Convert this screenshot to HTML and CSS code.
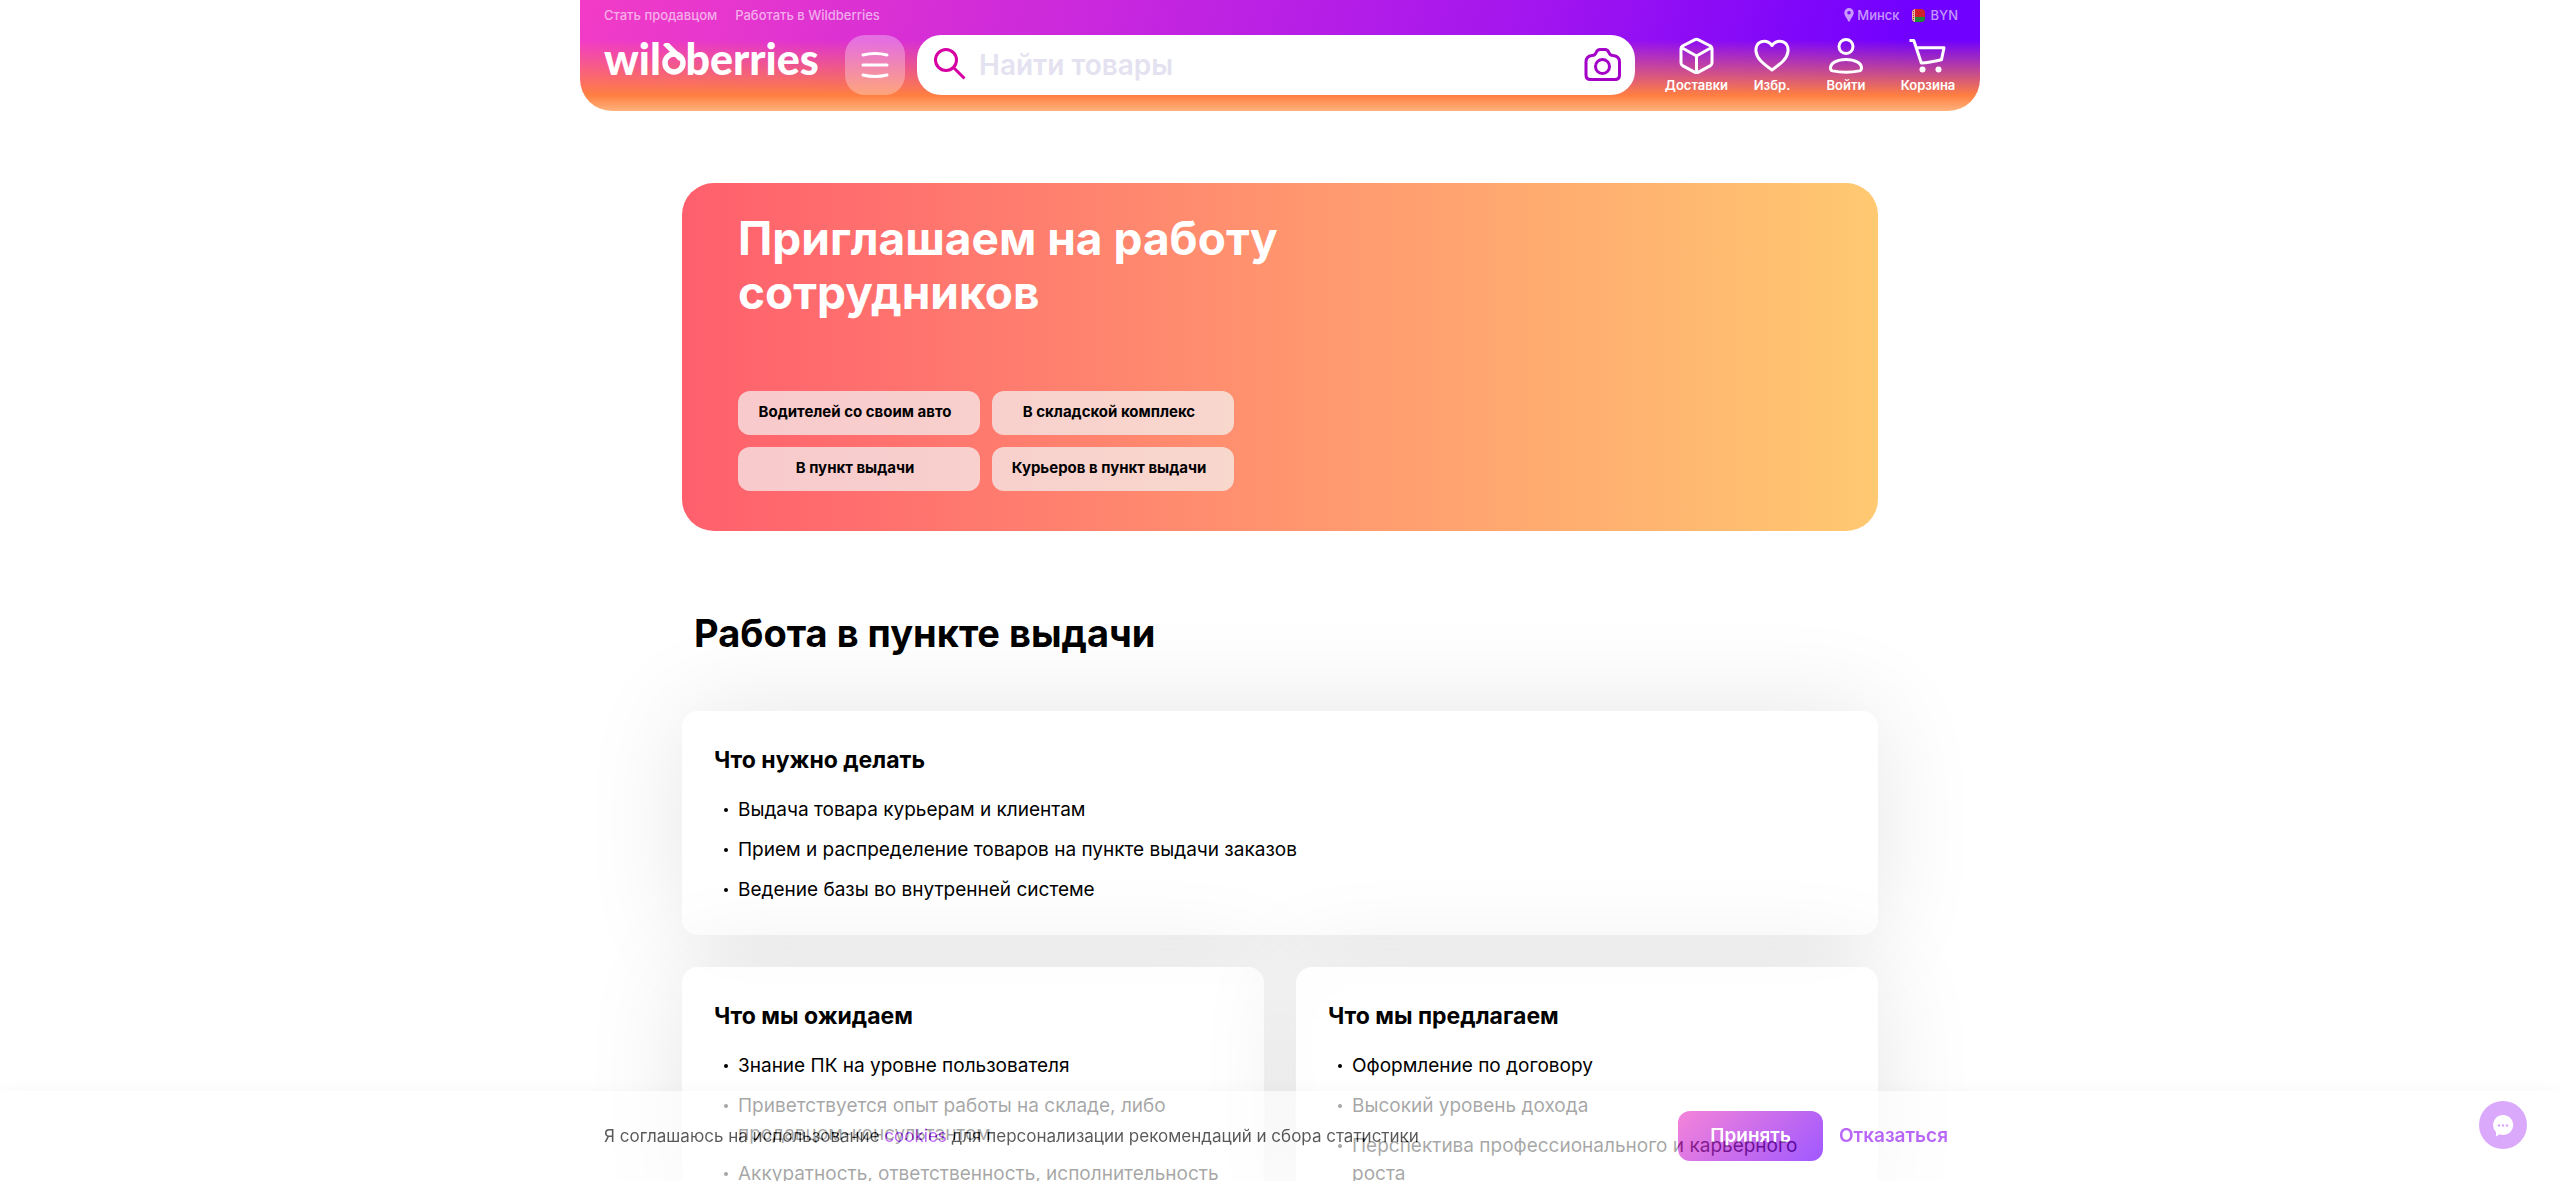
FILE: index.html
```html
<!DOCTYPE html>
<html lang="ru">
<head>
<meta charset="utf-8">
<meta name="viewport" content="width=device-width, initial-scale=1">
<title>Работа в Wildberries</title>
<link rel="stylesheet" href="styles.css">
</head>
<body>
<header class="header">
  <div class="topbar">
    <nav class="topbar-links">
      <a href="#">Стать продавцом</a>
      <a href="#">Работать в Wildberries</a>
    </nav>
    <div class="topbar-region">
      <a class="region-link" href="#">
        <svg width="10" height="14" viewBox="0 0 10 14" aria-hidden="true"><path fill="currentColor" fill-rule="evenodd" d="M5 0a4.700 4.700 0 0 0-4.700 4.700C.3 8 3.500 10.500 4.300 13.500h1.400C6.500 10.500 9.700 8 9.700 4.700A4.700 4.700 0 0 0 5 0Zm0 3a1.800 1.800 0 1 1 0 3.600A1.800 1.800 0 0 1 5 3Z"/></svg>
        Минск
      </a>
      <button class="currency" type="button">
        <svg width="13" height="13" viewBox="0 0 13 13" aria-hidden="true">
          <clipPath id="flag"><rect width="13" height="13" rx="4"/></clipPath>
          <g clip-path="url(#flag)"><rect width="13" height="13" fill="#d0202a"/><rect y="8" width="13" height="5" fill="#1c8a3c"/><rect width="3" height="13" fill="#e9b9a8"/><path stroke="#c8202a" stroke-dasharray="1 1" d="M1.500 0v13"/></g>
        </svg>
        BYN
      </button>
    </div>
  </div>
  <div class="header-main">
    <a class="logo" href="#" aria-label="wildberries">wil<span class="logo-d">d<svg width="26" height="32" viewBox="0 0 26 32" fill="none" stroke="#fff" stroke-width="5.500" aria-hidden="true"><circle cx="13" cy="20" r="9"/><path d="M4 0l16 16"/></svg></span>berries</a>
    <div class="search-row">
      <button class="menu-button" type="button" aria-label="Каталог">
        <svg width="30" height="30" viewBox="0 0 30 30" fill="none" stroke="#fff" stroke-width="3" stroke-linecap="round" aria-hidden="true"><path d="M3 5q12-3 24 0M3 15h24M3 25q12 3 24 0"/></svg>
      </button>
      <form class="search">
        <svg width="40" height="40" viewBox="0 0 40 40" fill="none" stroke="#d600a2" stroke-width="3" aria-hidden="true"><circle cx="16" cy="15" r="10.500"/><path d="M23.500 22.500 34.500 33.500"/></svg>
        <input class="search-input" type="search" placeholder="Найти товары" aria-label="Найти товары">
        <button class="camera" type="button" aria-label="Поиск по фото">
          <svg width="40" height="40" viewBox="0 0 40 40" fill="none" stroke="#a400c8" stroke-width="3" stroke-linejoin="round" aria-hidden="true"><path d="M9 10.500c2.500 0 3.500-1 4.300-3.200C14.200 5 15 4.500 17 4.500h5c2 0 2.800.5 3.700 2.800.8 2.200 1.800 3.200 4.300 3.200 4.500.5 6.500 3 6.500 6.500v13c0 3-1.500 4.500-4.500 4.500H7.500c-3 0-4.500-1.500-4.500-4.500V17c0-3.500 1.500-6 6-6.500Z"/><circle cx="19.500" cy="21.500" r="7"/></svg>
        </button>
      </form>
    </div>
    <nav class="actions">
      <a class="action" href="#">
        <svg width="40" height="40" viewBox="0 0 40 40" aria-hidden="true"><path d="M18.500 4.800q2-1 4 0l12 6.200q1.500 1 1.500 2.800v14q0 1.800-1.500 2.800l-12 6.500q-2 1-4 0l-12-6.500Q5 29.600 5 27.800v-14Q5 12 6.500 11ZM5.500 12.500l15 8.500 15-8.500M20.500 21v16.500"/></svg>
        Доставки
      </a>
      <a class="action" href="#">
        <svg width="40" height="40" viewBox="0 0 40 40" aria-hidden="true"><path d="M20 10.500C17 6.500 13.500 6 10.500 6.500 5.500 7.300 3.500 11.500 4 16.500 4.700 23.500 11 28.500 20 35c9-6.500 15.300-11.500 16-18.500.5-5-1.500-9.200-6.500-10C26.500 6 23 6.500 20 10.500Z"/></svg>
        Избр.
      </a>
      <a class="action" href="#">
        <svg width="40" height="40" viewBox="0 0 40 40" aria-hidden="true"><circle cx="20" cy="11.500" r="7"/><path d="M20 24.500c-9 0-15.500 3.500-15.500 8.500 0 1.800.6 2.500 2 2.900 8 1.700 19 1.700 27 0 1.400-.4 2-1.100 2-2.900 0-5-6.500-8.500-15.500-8.500Z"/></svg>
        Войти
      </a>
      <a class="action action-cart" href="#">
        <svg width="40" height="40" viewBox="0 0 40 40" aria-hidden="true"><path d="M1.500 5.500h4.300l7.500 22.500q8-.3 20.200-3.300l2.500-12H8.500"/><g class="cart-wheels"><circle cx="14.500" cy="34.500" r="3"/><circle cx="30.500" cy="34.500" r="3"/></g></svg>
        Корзина
      </a>
    </nav>
  </div>
</header>

<main class="content">
  <section class="hero">
    <h1 class="hero-title">Приглашаем на работу сотрудников</h1>
    <div class="hero-links">
      <a href="#">Водителей со своим авто</a>
      <a href="#">В складской комплекс</a>
      <a href="#">В пункт выдачи</a>
      <a href="#">Курьеров в пункт выдачи</a>
    </div>
  </section>

  <h2 class="section-title">Работа в пункте выдачи</h2>
  <div class="cards">
    <section class="card card-wide">
      <h3>Что нужно делать</h3>
      <ul>
        <li>Выдача товара курьерам и клиентам</li>
        <li>Прием и распределение товаров на пункте выдачи заказов</li>
        <li>Ведение базы во внутренней системе</li>
      </ul>
    </section>
    <section class="card">
      <h3>Что мы ожидаем</h3>
      <ul>
        <li>Знание ПК на уровне пользователя</li>
        <li>Приветствуется опыт работы на складе, либо продавцом-консультантом</li>
        <li>Аккуратность, ответственность, исполнительность</li>
      </ul>
    </section>
    <section class="card">
      <h3>Что мы предлагаем</h3>
      <ul>
        <li>Оформление по договору</li>
        <li>Высокий уровень дохода</li>
        <li>Перспектива профессионального и карьерного роста</li>
      </ul>
    </section>
  </div>
</main>

<aside class="cookies">
  <div class="cookies-inner">
    <p>Я соглашаюсь на использование <a href="#">cookies</a> для персонализации рекомендаций и сбора статистики</p>
    <div class="cookies-actions">
      <button class="accept" type="button">Принять</button>
      <button class="decline" type="button">Отказаться</button>
    </div>
  </div>
</aside>

<button class="chat" type="button" aria-label="Чат">
  <svg width="24" height="24" viewBox="0 0 24 24" aria-hidden="true"><path fill="#fff" d="M12 2a10 10 0 1 1-3.500 19.300L5 23.500V19A10 10 0 0 1 12 2Z"/><g fill="#dba9fb"><circle cx="8" cy="12.500" r="1.300"/><circle cx="12" cy="12.500" r="1.300"/><circle cx="16" cy="12.500" r="1.300"/></g></svg>
</button>
</body>
</html>
```

FILE: styles.css
```css
*, *::before, *::after { box-sizing: border-box; }

body {
  margin: 0;
  background: #fff;
  color: #000;
  font-family: Inter, "Liberation Sans", sans-serif;
  font-size: 19px;
  line-height: 28px;
}

h1, h2, h3, p, ul { margin: 0; padding: 0; }
a { color: inherit; text-decoration: none; }
button, input { font: inherit; border: 0; padding: 0; background: none; color: inherit; }
button { cursor: pointer; }
svg { display: block; flex: none; }

/* Header */
.header {
  max-width: 1400px;
  margin: 0 auto;
  padding: 5px 22px 16px 24px;
  border-radius: 0 0 32px 32px;
  background:
    linear-gradient(180deg, rgba(255, 127, 65, 0) 36%, #ff7f41 86%, #ffb27d 100%),
    linear-gradient(105deg, #f23cc7 0%, #c727de 38%, #a416ee 66%, #7000ff 94%);
}
.topbar {
  display: flex;
  justify-content: space-between;
  margin-bottom: 10px;
  font-size: 13px;
  font-weight: 500;
  line-height: 20px;
  color: rgba(255, 255, 255, .6);
}
.topbar-links { display: flex; gap: 18px; }
.topbar-region { display: flex; gap: 12px; }
.region-link, .currency { display: flex; align-items: center; gap: 3px; }
.currency { gap: 6px; }

.header-main { display: flex; }
.logo {
  width: 241px;
  font-family: Lato, sans-serif;
  font-size: 43px;
  font-weight: 900;
  line-height: 48px;
  color: #fff;
}
.logo-d { position: relative; color: transparent; }
.logo-d svg { position: absolute; left: 0; bottom: 9px; }

.search-row { display: flex; flex: 1; gap: 12px; }
.menu-button {
  display: flex;
  align-items: center;
  justify-content: center;
  width: 60px;
  height: 60px;
  border-radius: 20px;
  background: rgba(255, 255, 255, .3);
}
.search {
  display: flex;
  flex: 1;
  align-items: center;
  gap: 9px;
  height: 60px;
  padding: 0 12px 0 13px;
  border-radius: 24px;
  background: #fff;
}
.search-input {
  flex: 1;
  min-width: 0;
  height: 60px;
  font-size: 28px;
  font-weight: 600;
  outline: none;
}
.search-input::placeholder { color: #e4e2f0; opacity: 1; }

.actions { display: flex; gap: 14px; margin-left: 30px; }
.action {
  display: flex;
  flex-direction: column;
  align-items: center;
  min-width: 60px;
  font-size: 13px;
  font-weight: 600;
  line-height: 20px;
  color: #fff;
}
.action-cart { margin-left: 8px; }
.action svg {
  fill: none;
  stroke: #fff;
  stroke-width: 3px;
  stroke-linejoin: round;
}
.action .cart-wheels { fill: #fff; stroke: none; }

/* Page content */
.content {
  max-width: 1196px;
  margin: 72px auto 0;
}
.hero {
  padding: 28px 56px 40px;
  border-radius: 32px;
  background: linear-gradient(90deg, #ff5f6d, #ffc971);
}
.hero-title {
  max-width: 560px;
  margin-bottom: 72px;
  font-size: 46px;
  font-weight: 700;
  line-height: 54px;
  color: #fff;
}
.hero-links {
  display: grid;
  grid-template-columns: repeat(2, 242px);
  gap: 12px;
}
.hero-links a {
  padding: 5px 8px 7px 0;
  border-radius: 12px;
  background: rgba(245, 245, 245, .7);
  font-size: 15px;
  font-weight: 700;
  line-height: 32px;
  text-align: center;
}

.section-title {
  margin: 78px 0 54px;
  padding: 0 12px;
  font-size: 38px;
  font-weight: 700;
  line-height: 48px;
}
.cards {
  display: grid;
  grid-template-columns: 1fr 1fr;
  gap: 32px;
}
.card {
  padding: 33px 32px 31px;
  border-radius: 16px;
  background: rgba(255, 255, 255, .8);
  box-shadow: 0 0 100px rgba(0, 0, 0, .1);
}
.card-wide { grid-column: 1 / -1; }
.card h3 {
  margin-bottom: 20px;
  font-size: 23px;
  font-weight: 700;
  line-height: 32px;
}
.card ul {
  display: flex;
  flex-direction: column;
  gap: 12px;
  list-style: none;
}
.card li { position: relative; padding-left: 24px; }
.card li::before {
  content: "";
  position: absolute;
  left: 10px;
  top: 12px;
  width: 4px;
  height: 4px;
  border-radius: 50%;
  background: currentColor;
}

/* Cookie notice */
.cookies {
  position: fixed;
  right: 0;
  bottom: 0;
  left: 0;
  padding: 20px 0;
  background: #fff;
  box-shadow: 0 0 20px rgba(0, 0, 100, .06);
  opacity: .65;
}
.cookies-inner {
  display: flex;
  align-items: center;
  justify-content: space-between;
  max-width: 1400px;
  margin: 0 auto;
  padding: 0 24px;
}
.cookies p { font-size: 17px; }
.cookies p a { color: #9417f3; }
.cookies-actions { display: flex; gap: 8px; font-weight: 600; }
.accept {
  height: 50px;
  padding: 0 32px;
  border-radius: 12px;
  background: linear-gradient(135deg, #f041c5, #6d00ff);
  color: #fff;
}
.decline { padding: 0 8px; color: #9417f3; }

.chat {
  position: fixed;
  right: 33px;
  bottom: 32px;
  display: flex;
  align-items: center;
  justify-content: center;
  width: 48px;
  height: 48px;
  border-radius: 50%;
  background: #dba9fb;
}
```
